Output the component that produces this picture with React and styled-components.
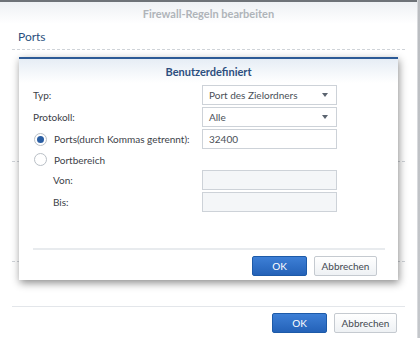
import React from "react";
import styled, { createGlobalStyle } from "styled-components";

const Global = createGlobalStyle`
  html, body { margin: 0; padding: 0; background: #ffffff; }
  body { font-family: Lato, "Liberation Sans", sans-serif; }
  #root { width: 420px; height: 338px; overflow: hidden; }
`;

const Screen = styled.div`
  display: flex;
  width: 420px;
  height: 338px;
  background: #ffffff;
`;

const Window = styled.div`
  width: 417px;
  height: 338px;
  display: flex;
  flex-direction: column;
  background: #ffffff;
`;

const SideStrip = styled.div`
  width: 3px;
  height: 338px;
  background: linear-gradient(#b9bcc0, #c4c7cb);
  border-left: 1px solid #d8dadd;
  box-sizing: border-box;
`;

const TopBar = styled.div`
  height: 2px;
  background: #6e7378;
`;

const Header = styled.div`
  height: 22px;
  display: flex;
  align-items: center;
  justify-content: center;
  background: linear-gradient(#eef1f4, #ffffff);
  color: #afb4b9;
  font-weight: 700;
  font-size: 11px;
`;

const Body = styled.div`
  flex: 1;
  display: flex;
  flex-direction: column;
  padding: 0 12px;
  position: relative;
`;

const SectionTitle = styled.div`
  font-size: 12px;
  color: #2b4f7e;
  padding: 5px 6px 0;
  height: 16px;
`;

const Dashed = styled.div`
  border-top: 1px dashed #cfd3d8;
  margin-top: ${(p) => p.$mt || 0}px;
`;

const Behind = styled.div`
  flex: 1;
  display: flex;
  flex-direction: column;
`;

const FadedRadio = styled.div`
  width: 11px;
  height: 11px;
  border-radius: 50%;
  border: 1px solid #c8ccd0;
  margin: 7px 0 0 9px;
`;

const Footer = styled.div`
  margin: 0 12px;
  border-top: 1px solid #e3e6ea;
  height: 32px;
  box-sizing: border-box;
  display: flex;
  justify-content: flex-end;
  align-items: flex-start;
  gap: 7px;
  padding: 6px 8px 0 0;
`;

const Button = styled.button`
  height: 20px;
  width: ${(p) => p.$w}px;
  box-sizing: border-box;
  border-radius: 2px;
  font-family: Lato, "Liberation Sans", sans-serif;
  font-size: 10px;
  padding: 0;
  cursor: pointer;
  border: 1px solid ${(p) => (p.$primary ? "#1d5aa8" : "#c5cad0")};
  color: ${(p) => (p.$primary ? "#ffffff" : "#444a52")};
  background: ${(p) =>
    p.$primary
      ? "linear-gradient(#3d7fd6, #2462b8)"
      : "linear-gradient(#ffffff, #eef1f4)"};
`;

const Modal = styled.div`
  position: absolute;
  left: 19px;
  top: 33px;
  width: 379px;
  height: 223px;
  box-sizing: border-box;
  background: #ffffff;
  border-top: 2px solid #2c5a96;
  box-shadow: 1px 3px 8px rgba(0, 0, 0, 0.45);
  display: flex;
  flex-direction: column;
`;

const ModalHeader = styled.div`
  height: 24px;
  display: flex;
  align-items: center;
  justify-content: center;
  background: linear-gradient(#e6edf5, #ffffff);
  color: #2d4f7f;
  font-weight: 700;
  font-size: 11px;
`;

const Form = styled.div`
  display: flex;
  flex-direction: column;
  padding: 2px 14px 0;
  gap: 2px;
  flex: 1;
`;

const Row = styled.div`
  display: grid;
  grid-template-columns: 169px 135px;
  align-items: center;
  height: ${(p) => p.$h || 20}px;
`;

const Label = styled.div`
  font-size: 10px;
  color: #3c4148;
  padding-left: ${(p) => p.$indent || 0}px;
  display: flex;
  align-items: center;
  gap: 7px;
`;

const Radio = styled.span`
  width: 11px;
  height: 11px;
  border-radius: 50%;
  border: 1px solid #b9bfc6;
  background: #ffffff;
  display: inline-flex;
  align-items: center;
  justify-content: center;
  margin-left: 1px;
  &::after {
    content: "";
    width: 7px;
    height: 7px;
    border-radius: 50%;
    background: ${(p) => (p.$checked ? "#2a5ea3" : "transparent")};
  }
`;

const Field = styled.div`
  height: 20px;
  box-sizing: border-box;
  border: 1px solid #cdd2d8;
  background: ${(p) => (p.$disabled ? "#f4f6f8" : "#ffffff")};
  display: flex;
  align-items: center;
  justify-content: space-between;
  padding: 0 8px 0 6px;
  font-size: 10px;
  color: #4a5058;
`;

const Caret = styled.span`
  width: 0;
  height: 0;
  border-left: 3.5px solid transparent;
  border-right: 3.5px solid transparent;
  border-top: 4px solid #5b6470;
`;

const ModalDivider = styled.div`
  margin: 0 13px 0 14px;
  border-top: 2px solid #e8ebee;
`;

const ModalFooter = styled.div`
  display: flex;
  justify-content: flex-end;
  gap: 7px;
  padding: 6px 21px 0 0;
  height: 30px;
  box-sizing: border-box;
`;

export default function App() {
  return (
    <>
      <Global />
      <Screen>
        <Window>
          <TopBar />
          <Header>Firewall-Regeln bearbeiten</Header>
          <Body>
            <SectionTitle>Ports</SectionTitle>
            <Dashed $mt={4} />
            <Behind>
              <FadedRadio />
              <Dashed $mt={91} />
              <Dashed $mt={99} />
            </Behind>
            <Modal>
              <ModalHeader>Benutzerdefiniert</ModalHeader>
              <Form>
                <Row>
                  <Label>Typ:</Label>
                  <Field>
                    Port des Zielordners
                    <Caret />
                  </Field>
                </Row>
                <Row>
                  <Label>Protokoll:</Label>
                  <Field>
                    Alle
                    <Caret />
                  </Field>
                </Row>
                <Row>
                  <Label>
                    <Radio $checked />
                    Ports(durch Kommas getrennt):
                  </Label>
                  <Field>32400</Field>
                </Row>
                <Row $h={17}>
                  <Label>
                    <Radio />
                    Portbereich
                  </Label>
                </Row>
                <Row>
                  <Label $indent={20}>Von:</Label>
                  <Field $disabled />
                </Row>
                <Row>
                  <Label $indent={20}>Bis:</Label>
                  <Field $disabled />
                </Row>
              </Form>
              <ModalDivider />
              <ModalFooter>
                <Button $primary $w={55}>OK</Button>
                <Button $w={63}>Abbrechen</Button>
              </ModalFooter>
            </Modal>
          </Body>
          <Footer>
            <Button $primary $w={55}>OK</Button>
            <Button $w={63}>Abbrechen</Button>
          </Footer>
        </Window>
        <SideStrip />
      </Screen>
    </>
  );
}
